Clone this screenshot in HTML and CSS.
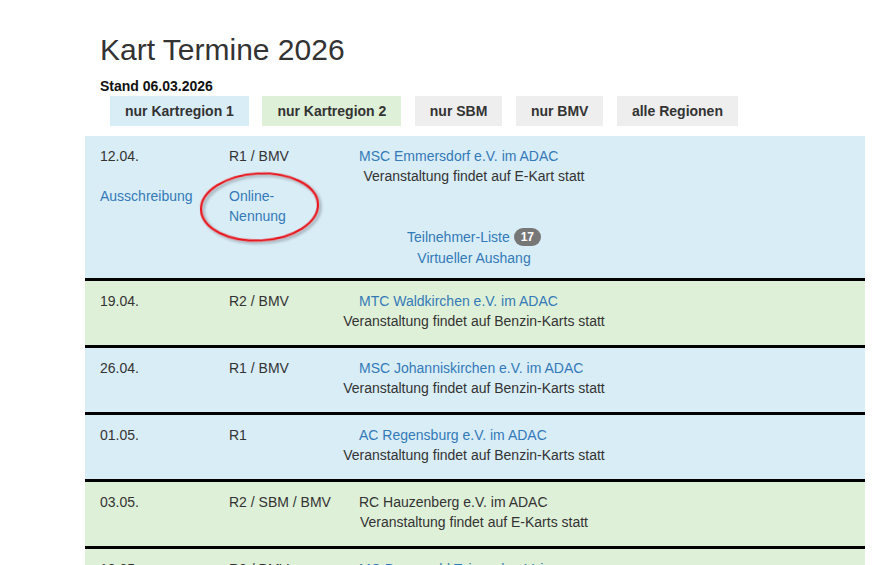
FILE: index.html
```html
<!DOCTYPE html>
<html lang="de">
<head>
<meta charset="utf-8">
<title>Kart Termine 2026</title>
<link rel="stylesheet" href="styles.css">
</head>
<body>
<div class="page">
  <h1 class="title">Kart Termine 2026</h1>
  <div class="stand">Stand 06.03.2026</div>
  <div class="filters">
    <span class="btn btn-blue">nur Kartregion 1</span>
    <span class="btn btn-green">nur Kartregion 2</span>
    <span class="btn">nur SBM</span>
    <span class="btn">nur BMV</span>
    <span class="btn">alle Regionen</span>
  </div>

  <div class="event blue first">
    <div class="grid">
      <div class="c1">12.04.</div>
      <div class="c2">R1 / BMV</div>
      <div class="c3"><a href="#">MSC Emmersdorf e.V. im ADAC</a><div class="desc">Veranstaltung findet auf E-Kart statt</div></div>
    </div>
    <div class="grid">
      <div class="c1"><a href="#">Ausschreibung</a></div>
      <div class="c2 wrap"><a href="#">Online-Nennung</a></div>
      <div class="c3"></div>
    </div>
    <div class="grid">
      <div class="c1"></div>
      <div class="c2"></div>
      <div class="c3">
        <div class="desc tl"><a href="#">Teilnehmer-Liste</a> <span class="badge">17</span></div>
        <div class="desc"><a href="#">Virtueller Aushang</a></div>
      </div>
    </div>
    <svg class="mark" width="140" height="90" viewBox="0 0 140 90">
      <defs>
        <filter id="sh" x="-20%" y="-20%" width="140%" height="150%">
          <feDropShadow dx="2" dy="2" stdDeviation="1.5" flood-color="#000" flood-opacity="0.35"/>
        </filter>
      </defs>
      <ellipse cx="69.5" cy="42" rx="58.5" ry="33.5" transform="rotate(-3 69.5 42)" fill="none" stroke="#e8141b" stroke-width="2.2" filter="url(#sh)"/>
    </svg>
  </div>

  <div class="event green">
    <div class="grid">
      <div class="c1">19.04.</div>
      <div class="c2">R2 / BMV</div>
      <div class="c3"><a href="#">MTC Waldkirchen e.V. im ADAC</a><div class="desc">Veranstaltung findet auf Benzin-Karts statt</div></div>
    </div>
  </div>

  <div class="event blue">
    <div class="grid">
      <div class="c1">26.04.</div>
      <div class="c2">R1 / BMV</div>
      <div class="c3"><a href="#">MSC Johanniskirchen e.V. im ADAC</a><div class="desc">Veranstaltung findet auf Benzin-Karts statt</div></div>
    </div>
  </div>

  <div class="event blue">
    <div class="grid">
      <div class="c1">01.05.</div>
      <div class="c2">R1</div>
      <div class="c3"><a href="#">AC Regensburg e.V. im ADAC</a><div class="desc">Veranstaltung findet auf Benzin-Karts statt</div></div>
    </div>
  </div>

  <div class="event green">
    <div class="grid">
      <div class="c1">03.05.</div>
      <div class="c2">R2 / SBM / BMV</div>
      <div class="c3">RC Hauzenberg e.V. im ADAC<div class="desc">Veranstaltung findet auf E-Karts statt</div></div>
    </div>
  </div>

  <div class="event green">
    <div class="grid">
      <div class="c1">10.05.</div>
      <div class="c2">R2 / BMV</div>
      <div class="c3"><a href="#">MC Bayerwald Teisnach e.V. im ADAC</a><div class="desc">Veranstaltung findet auf Benzin-Karts statt</div></div>
    </div>
  </div>
</div>
</body>
</html>
```

FILE: styles.css
```css
html, body {
  margin: 0;
  padding: 0;
  background: #fff;
}
body {
  font-family: "Liberation Sans", Arial, sans-serif;
  font-size: 14px;
  line-height: 20px;
  color: #333;
}
a {
  color: #337ab7;
  text-decoration: none;
}
.page {
  margin-left: 85px;
  width: 780px;
  padding-top: 33px;
}
.title {
  margin: 0;
  padding: 0 15px;
  font-size: 30px;
  line-height: 33px;
  font-weight: normal;
  color: #333;
}
.stand {
  margin-top: 10px;
  padding: 0 15px;
  font-weight: bold;
  color: #111;
}
.filters {
  display: flex;
  gap: 13.5px;
  padding-left: 25px;
  margin-bottom: 10px;
}
.btn {
  display: block;
  padding: 5px 15px;
  font-weight: bold;
  background: #eee;
  color: #333;
}
.btn-blue { background: #d9edf7; }
.btn-green { background: #dff0d8; }

.event {
  position: relative;
  padding: 10px 0 14px;
  border-bottom: 3px solid #000;
}
.event.first {
  padding-bottom: 10px;
}
.blue { background: #d9edf7; }
.green { background: #dff0d8; }

.grid {
  display: grid;
  grid-template-columns: 129px 130px 260px 1fr;
}
.c1, .c2, .c3 {
  padding: 0 15px;
}
.c2 {
  white-space: nowrap;
}
.c2.wrap {
  white-space: normal;
}
.desc {
  margin: 0 -45px;
  text-align: center;
  white-space: nowrap;
}
.tl {
  line-height: 22px;
}
.badge {
  display: inline-block;
  padding: 3px 7px;
  font-size: 12px;
  font-weight: bold;
  line-height: 1;
  color: #fff;
  background: #777;
  border-radius: 10px;
  vertical-align: 1px;
}
.mark {
  position: absolute;
  left: 105px;
  top: 29px;
  overflow: visible;
}
```
